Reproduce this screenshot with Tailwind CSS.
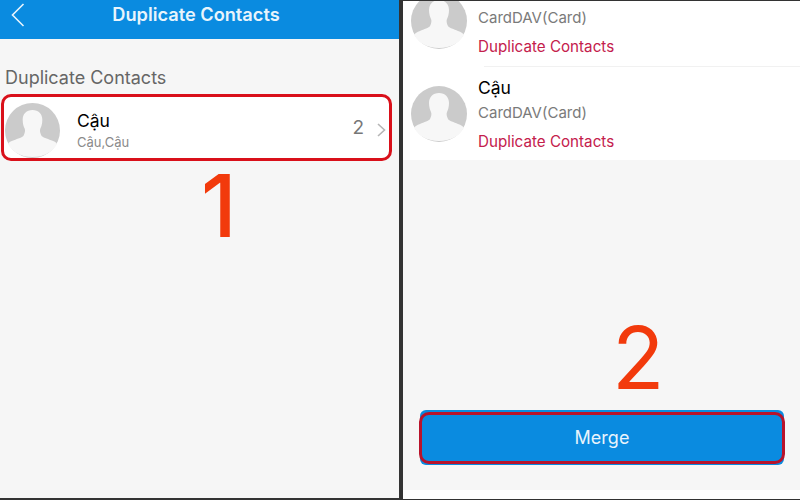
<!DOCTYPE html>
<html lang="en">
<head>
    <meta charset="UTF-8">
    <title>Duplicate Contacts</title>
    <script src="https://cdn.jsdelivr.net/npm/@tailwindcss/browser@4"></script>
</head>
<body class="bg-[#333333] font-['Inter',sans-serif] antialiased">
    <div class="w-[800px] h-[500px] overflow-hidden flex">

        <!-- Left phone -->
        <section class="relative w-[399px] h-[498px] bg-[#f6f6f6]">
            <header class="relative h-[39px] bg-[#0a8be0] flex justify-center pr-[7px]">
                <svg class="absolute left-[11px] top-[3px]" width="14" height="24" viewBox="0 0 14 24" fill="none" stroke="#e8f4fc" stroke-width="1.6"><path d="M12.5 1 1.500 12l11 11"/></svg>
                <h1 class="text-[18.2px] leading-[29px] font-semibold text-[#e8f4fc]">Duplicate Contacts</h1>
            </header>
            <p class="pl-[5px] pt-[28px] text-[18px] leading-[22px] text-[#666666]">Duplicate Contacts</p>
            <div class="mt-[5px] ml-px mr-[7px] h-[67px] bg-white border-[3px] border-[#d9101a] rounded-[10px] overflow-hidden flex items-center pl-px pr-[3px]">
                <svg class="shrink-0 self-start mt-[6px]" width="55" height="55" viewBox="0 0 56 56"><circle cx="28" cy="28" r="28" fill="#cbcbcb"/><path d="M28 7c-6 0-10 4-10 10 0 4 1 7 2 9 1 2 0 5-1 7-1 2-6 3-10 5-3 1-5 2-6 4 5 8 13 13 25 13s20-5 25-13c-1-2-3-3-6-4-4-2-9-3-10-5s-2-5-1-7c1-2 2-5 2-9 0-6-4-10-10-10z" fill="#f7f7f7"/></svg>
                <div class="ml-[17px] pt-[4px] flex-1">
                    <p class="text-[17.5px] leading-[24px] text-black">Cậu</p>
                    <p class="text-[13px] leading-[18px] text-[#8a8a8a]">Cậu,Cậu</p>
                </div>
                <span class="text-[19px] text-[#777777] mt-[1px]">2</span>
                <svg class="ml-[13px] mt-[5px]" width="9" height="14" viewBox="0 0 9 14" fill="none" stroke="#b5b5b5" stroke-width="1.6"><path d="m1 1 6.500 6L1 13"/></svg>
            </div>
            <span class="absolute left-[201px] top-[156px] text-[#f23a0c] text-[86px] leading-[100px] font-medium">1</span>
        </section>

        <div class="w-[4px] bg-[#333333]"></div>

        <!-- Right phone -->
        <section class="relative flex-1 h-[498px] mt-px bg-[#f6f6f6] flex flex-col">
            <div class="h-[159px] bg-white overflow-hidden">
                <div class="relative h-[65px]">
                    <div class="absolute left-[8px] -top-[8px]">
                        <svg width="56" height="56" viewBox="0 0 56 56"><circle cx="28" cy="28" r="28" fill="#cbcbcb"/><path d="M28 7c-6 0-10 4-10 10 0 4 1 7 2 9 1 2 0 5-1 7-1 2-6 3-10 5-3 1-5 2-6 4 5 8 13 13 25 13s20-5 25-13c-1-2-3-3-6-4-4-2-9-3-10-5s-2-5-1-7c1-2 2-5 2-9 0-6-4-10-10-10z" fill="#f7f7f7"/></svg>
                    </div>
                    <div class="pl-[75px] pt-[8px]">
                        <p class="text-[15px] leading-[18px] text-[#7a7a7a]">CardDAV(Card)</p>
                        <p class="mt-[11px] text-[15.2px] leading-[18px] text-[#c4204c]">Duplicate Contacts</p>
                    </div>
                </div>
                <div class="ml-[81px] h-px bg-[#f1f1f1]"></div>
                <div class="flex items-center h-[93px] pl-[8px]">
                    <svg class="shrink-0" width="56" height="56" viewBox="0 0 56 56"><circle cx="28" cy="28" r="28" fill="#cbcbcb"/><path d="M28 7c-6 0-10 4-10 10 0 4 1 7 2 9 1 2 0 5-1 7-1 2-6 3-10 5-3 1-5 2-6 4 5 8 13 13 25 13s20-5 25-13c-1-2-3-3-6-4-4-2-9-3-10-5s-2-5-1-7c1-2 2-5 2-9 0-6-4-10-10-10z" fill="#f7f7f7"/></svg>
                    <div class="ml-[11px] -mt-[1px]">
                        <p class="text-[17.5px] leading-[24px] text-black">Cậu</p>
                        <p class="mt-[4px] text-[15px] leading-[18px] text-[#7a7a7a]">CardDAV(Card)</p>
                        <p class="mt-[11px] text-[15.2px] leading-[18px] text-[#c4204c]">Duplicate Contacts</p>
                    </div>
                </div>
            </div>
            <div class="flex-1 flex flex-col justify-end">
                <div class="relative ml-[17px] mr-[16px] mb-[25px] h-[55px] bg-[#0a8be0] rounded-[6px] flex items-center justify-center">
                    <span class="text-[18px] text-[#e8f4fc]">Merge</span>
                    <div class="absolute -left-px -right-px top-[2px] bottom-[1px] border-[3px] border-[#b8132b] rounded-[10px]"></div>
                </div>
            </div>
            <div class="h-[9px] bg-white"></div>
            <span class="absolute left-[209px] top-[307px] text-[#f23a0c] text-[86px] leading-[100px]">2</span>
        </section>
    </div>
</body>
</html>
